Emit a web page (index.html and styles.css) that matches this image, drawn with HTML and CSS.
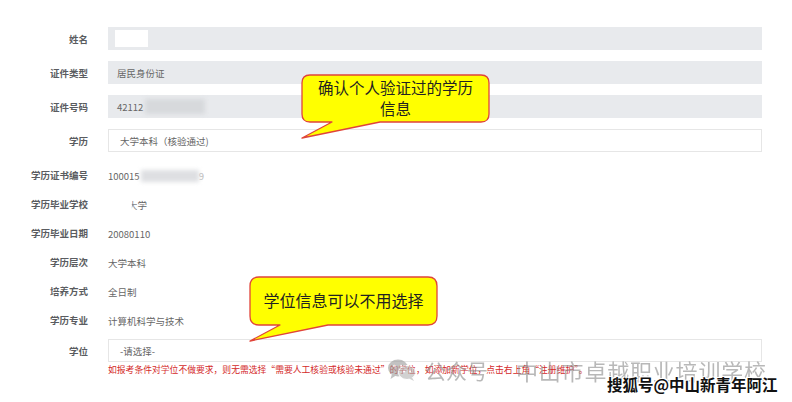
FILE: index.html
```html
<!DOCTYPE html>
<html lang="zh-CN">
<head>
<meta charset="utf-8">
<title>学历信息</title>
<link rel="stylesheet" href="styles.css">
</head>
<body>
<div class="page">
  <div class="form">
    <div class="row field-row">
      <div class="label">姓名</div>
      <div class="field gray"><span class="mask-white"></span></div>
    </div>
    <div class="row field-row">
      <div class="label">证件类型</div>
      <div class="field gray">居民身份证</div>
    </div>
    <div class="row field-row">
      <div class="label">证件号码</div>
      <div class="field gray">42112<span class="blur blur-id"></span></div>
    </div>
    <div class="row field-row">
      <div class="label">学历</div>
      <div class="field white">大学本科（核验通过)</div>
    </div>
    <div class="text-rows">
      <div class="row text-row">
        <div class="label">学历证书编号</div>
        <div class="value">100015<span class="blur blur-cert"></span><span class="faint">9</span></div>
      </div>
      <div class="row text-row">
        <div class="label">学历毕业学校</div>
        <div class="value school"><span class="faint-da">大</span>学</div>
      </div>
      <div class="row text-row">
        <div class="label">学历毕业日期</div>
        <div class="value">20080110</div>
      </div>
      <div class="row text-row">
        <div class="label">学历层次</div>
        <div class="value">大学本科</div>
      </div>
      <div class="row text-row">
        <div class="label">培养方式</div>
        <div class="value">全日制</div>
      </div>
      <div class="row text-row">
        <div class="label">学历专业</div>
        <div class="value">计算机科学与技术</div>
      </div>
    </div>
    <div class="row field-row degree-row">
      <div class="label">学位</div>
      <div class="field white select">-请选择-</div>
    </div>
    <div class="row note-row">
      <div></div>
      <div class="note">如报考条件对学位不做要求，则无需选择“需要人工核验或核验未通过”的学位，如添加新学位，点击右上角“注册维护”。</div>
    </div>
  </div>

  <svg class="bubbles" width="792" height="402" viewBox="0 0 792 402" aria-hidden="true">
    <path d="M310,75 H481 Q489,75 489,83 V114 Q489,122 481,122 H380 L302,138 L332,122 H310 Q302,122 302,114 V83 Q302,75 310,75 Z" fill="#ffff00" stroke="#e0443a" stroke-width="1.3" stroke-linejoin="round"/>
    <path d="M259,277 H428 Q437,277 437,286 V316 Q437,325 428,325 H328 L250,341 L280,325 H259 Q250,325 250,316 V286 Q250,277 259,277 Z" fill="#ffff00" stroke="#e0443a" stroke-width="1.3" stroke-linejoin="round"/>
  </svg>
  <div class="bubble-text b1">确认个人验证过的学历<br>信息</div>
  <div class="bubble-text b2">学位信息可以不用选择</div>

  <div class="watermark">
    <svg class="wx" width="30" height="24" viewBox="0 0 30 24" aria-hidden="true">
      <ellipse cx="11" cy="10" rx="10" ry="8.5" fill="#9a9a9a"/>
      <path d="M5,16 L3.5,21 L9,17.5 Z" fill="#9a9a9a"/>
      <ellipse cx="20" cy="14.5" rx="8.5" ry="7" fill="#b4b4b4" stroke="#fff" stroke-width="1"/>
      <path d="M25,19.5 L27,23 L22,20.5 Z" fill="#b4b4b4"/>
      <circle cx="7.5" cy="8" r="1.3" fill="#fff"/>
      <circle cx="14" cy="8" r="1.3" fill="#fff"/>
      <circle cx="17" cy="13.5" r="1.1" fill="#fff"/>
      <circle cx="23" cy="13.5" r="1.1" fill="#fff"/>
    </svg>
    <span class="wm-text wm-a">公众号</span>
    <span class="wm-text wm-b">中山市卓越职业培训学校</span>
  </div>
  <div class="sohu">搜狐号@中山新青年阿江</div>
</div>
</body>
</html>
```

FILE: styles.css
```css
* { box-sizing: border-box; }
html, body {
  margin: 0;
  padding: 0;
  background: #ffffff;
}
body {
  font-family: "Noto Sans CJK SC", "Noto Sans", "Liberation Sans", sans-serif;
  color: #666;
}
.page {
  position: relative;
  width: 792px;
  height: 402px;
  overflow: hidden;
}
.form {
  padding-top: 27px;
}
.row {
  display: grid;
  grid-template-columns: 88px 654px;
  column-gap: 20px;
}
.label {
  text-align: right;
  font-size: 9.5px;
  font-weight: 700;
  color: #5a5c60;
  white-space: nowrap;
}
.field-row {
  height: 23px;
  margin-bottom: 11px;
  align-items: center;
}
.field {
  height: 23px;
  display: flex;
  align-items: center;
  padding-left: 9px;
  font-size: 9.5px;
  color: #666;
}
.gray {
  background: #e8eaed;
}
.white {
  background: #fff;
  border: 1px solid #e6e6e6;
  padding-left: 11px;
}
.select { padding-left: 11px; }
.mask-white {
  display: inline-block;
  width: 33px;
  height: 17px;
  margin-left: -2px;
  background: #fff;
}
.blur {
  display: inline-block;
  background: #d7d9dc;
  filter: blur(2px);
}
.blur-id {
  width: 60px;
  height: 15px;
  margin-left: 2px;
}
.text-rows {
  margin-top: -2px;
}
.text-row {
  height: 29px;
}
.text-row .label {
  padding-top: 7px;
  line-height: 14px;
}
.text-row .value {
  line-height: 14px;
  font-size: 9.5px;
  color: #666;
  display: flex;
  align-items: center;
}
.blur-cert {
  width: 58px;
  height: 12px;
  margin-left: 1px;
  background: #dedfe2;
}
.faint { color: #bbb; }
.school { padding-left: 20px; }
.faint-da {
  color: #888;
  clip-path: inset(0 0 0 40%);
}
.degree-row {
  margin-top: 4px;
  margin-bottom: 0;
  height: 23px;
}
.note-row {
  margin-top: 1px;
}
.note {
  font-size: 8.8px;
  line-height: 13px;
  color: #d42a2a;
  white-space: nowrap;
}
.bubbles {
  position: absolute;
  left: 0;
  top: 0;
}
.bubble-text {
  position: absolute;
  font-family: "Noto Sans CJK SC", sans-serif;
  color: #222;
  text-align: center;
  white-space: nowrap;
}
.b1 {
  left: 302px;
  top: 75px;
  width: 187px;
  font-size: 15.5px;
  line-height: 21px;
  padding-top: 2px;
}
.b2 {
  left: 250px;
  top: 277px;
  width: 187px;
  font-size: 16px;
  line-height: 46px;
}
.watermark {
  position: absolute;
  left: 387px;
  top: 356px;
  display: flex;
  align-items: center;
  opacity: 0.6;
}
.wx { margin-right: 8px; }
.wm-text {
  line-height: 28px;
  color: #8a8a8a;
  white-space: nowrap;
}
.wm-a {
  font-size: 21px;
  margin-right: 28px;
}
.wm-b {
  font-size: 22px;
  letter-spacing: 0.8px;
}
.sohu {
  position: absolute;
  left: 607px;
  top: 374px;
  font-size: 15.5px;
  line-height: 20px;
  font-weight: 700;
  color: #111;
  white-space: nowrap;
  text-shadow: -1px -1px 0 #fff, 1px -1px 0 #fff, -1px 1px 0 #fff, 1px 1px 0 #fff, 0 0 2px #fff;
}
```
